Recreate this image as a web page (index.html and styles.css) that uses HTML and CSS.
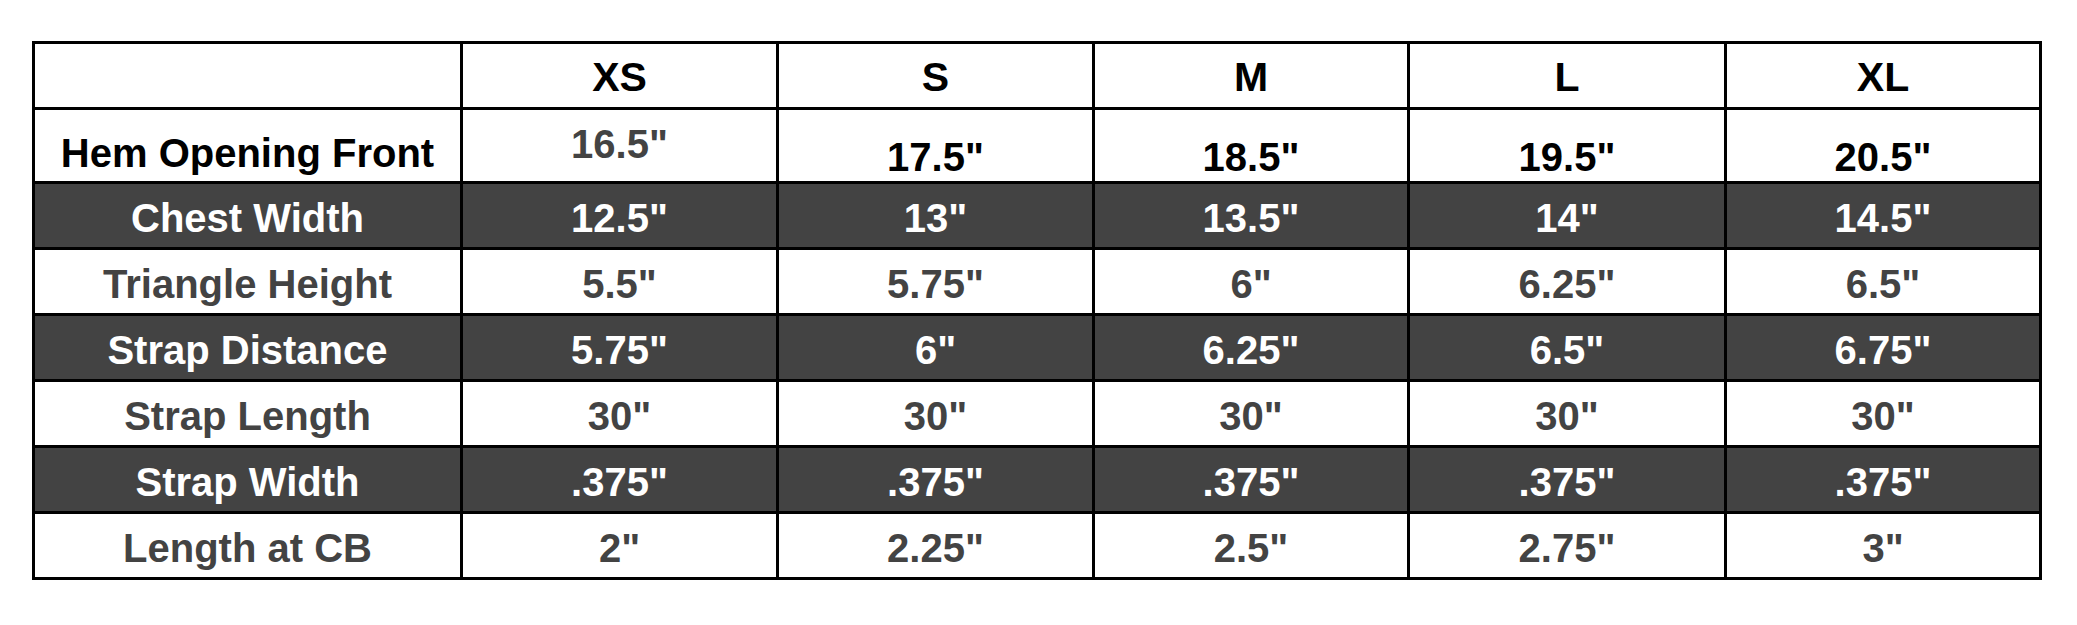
FILE: index.html
```html
<!DOCTYPE html>
<html>
<head>
<meta charset="utf-8">
<link rel="stylesheet" href="styles.css">
</head>
<body>
<table class="size-chart">
  <colgroup>
    <col class="c-label">
    <col class="c1"><col class="c2"><col class="c3"><col class="c4"><col class="c5">
  </colgroup>
  <tr class="head">
    <td></td><td>XS</td><td>S</td><td>M</td><td>L</td><td>XL</td>
  </tr>
  <tr class="hem">
    <td class="label">Hem Opening Front</td><td class="grey mid">16.5"</td><td>17.5"</td><td>18.5"</td><td>19.5"</td><td>20.5"</td>
  </tr>
  <tr class="dark">
    <td>Chest Width</td><td>12.5"</td><td>13"</td><td>13.5"</td><td>14"</td><td>14.5"</td>
  </tr>
  <tr class="light">
    <td>Triangle Height</td><td>5.5"</td><td>5.75"</td><td>6"</td><td>6.25"</td><td>6.5"</td>
  </tr>
  <tr class="dark">
    <td>Strap Distance</td><td>5.75"</td><td>6"</td><td>6.25"</td><td>6.5"</td><td>6.75"</td>
  </tr>
  <tr class="light">
    <td>Strap Length</td><td>30"</td><td>30"</td><td>30"</td><td>30"</td><td>30"</td>
  </tr>
  <tr class="dark">
    <td>Strap Width</td><td>.375"</td><td>.375"</td><td>.375"</td><td>.375"</td><td>.375"</td>
  </tr>
  <tr class="light">
    <td>Length at CB</td><td>2"</td><td>2.25"</td><td>2.5"</td><td>2.75"</td><td>3"</td>
  </tr>
</table>
</body>
</html>
```
FILE: styles.css
```css
html, body {
  margin: 0;
  padding: 0;
  background: #ffffff;
}
body {
  padding: 41px 0 0 32px;
}
.size-chart {
  border-collapse: collapse;
  table-layout: fixed;
  width: 2009px;
  font-family: "Liberation Sans", Arial, Helvetica, sans-serif;
  font-weight: bold;
  font-size: 40px;
  text-align: center;
  color: #000;
}
.c-label { width: 428px; }
.c1 { width: 316px; }
.c2 { width: 316px; }
.c3 { width: 315px; }
.c4 { width: 317px; }
.c5 { width: 315px; }
.size-chart td {
  border: 3px solid #000;
  padding: 0;
  vertical-align: middle;
  line-height: 1;
  white-space: nowrap;
}
.head td {
  height: 60px;
  padding-top: 3px;
  font-size: 41px;
}
.hem td {
  height: 67px;
  vertical-align: bottom;
  padding-bottom: 4px;
}
.hem td.label {
  padding-bottom: 8px;
  height: 63px;
}
.hem td.mid {
  vertical-align: middle;
  padding-bottom: 3px;
  height: 68px;
}
.grey {
  color: #434343;
}
.dark td {
  height: 59px;
  background: #434343;
  color: #ffffff;
  padding-top: 4px;
}
.light td {
  height: 59px;
  color: #434343;
  padding-top: 4px;
}
```
